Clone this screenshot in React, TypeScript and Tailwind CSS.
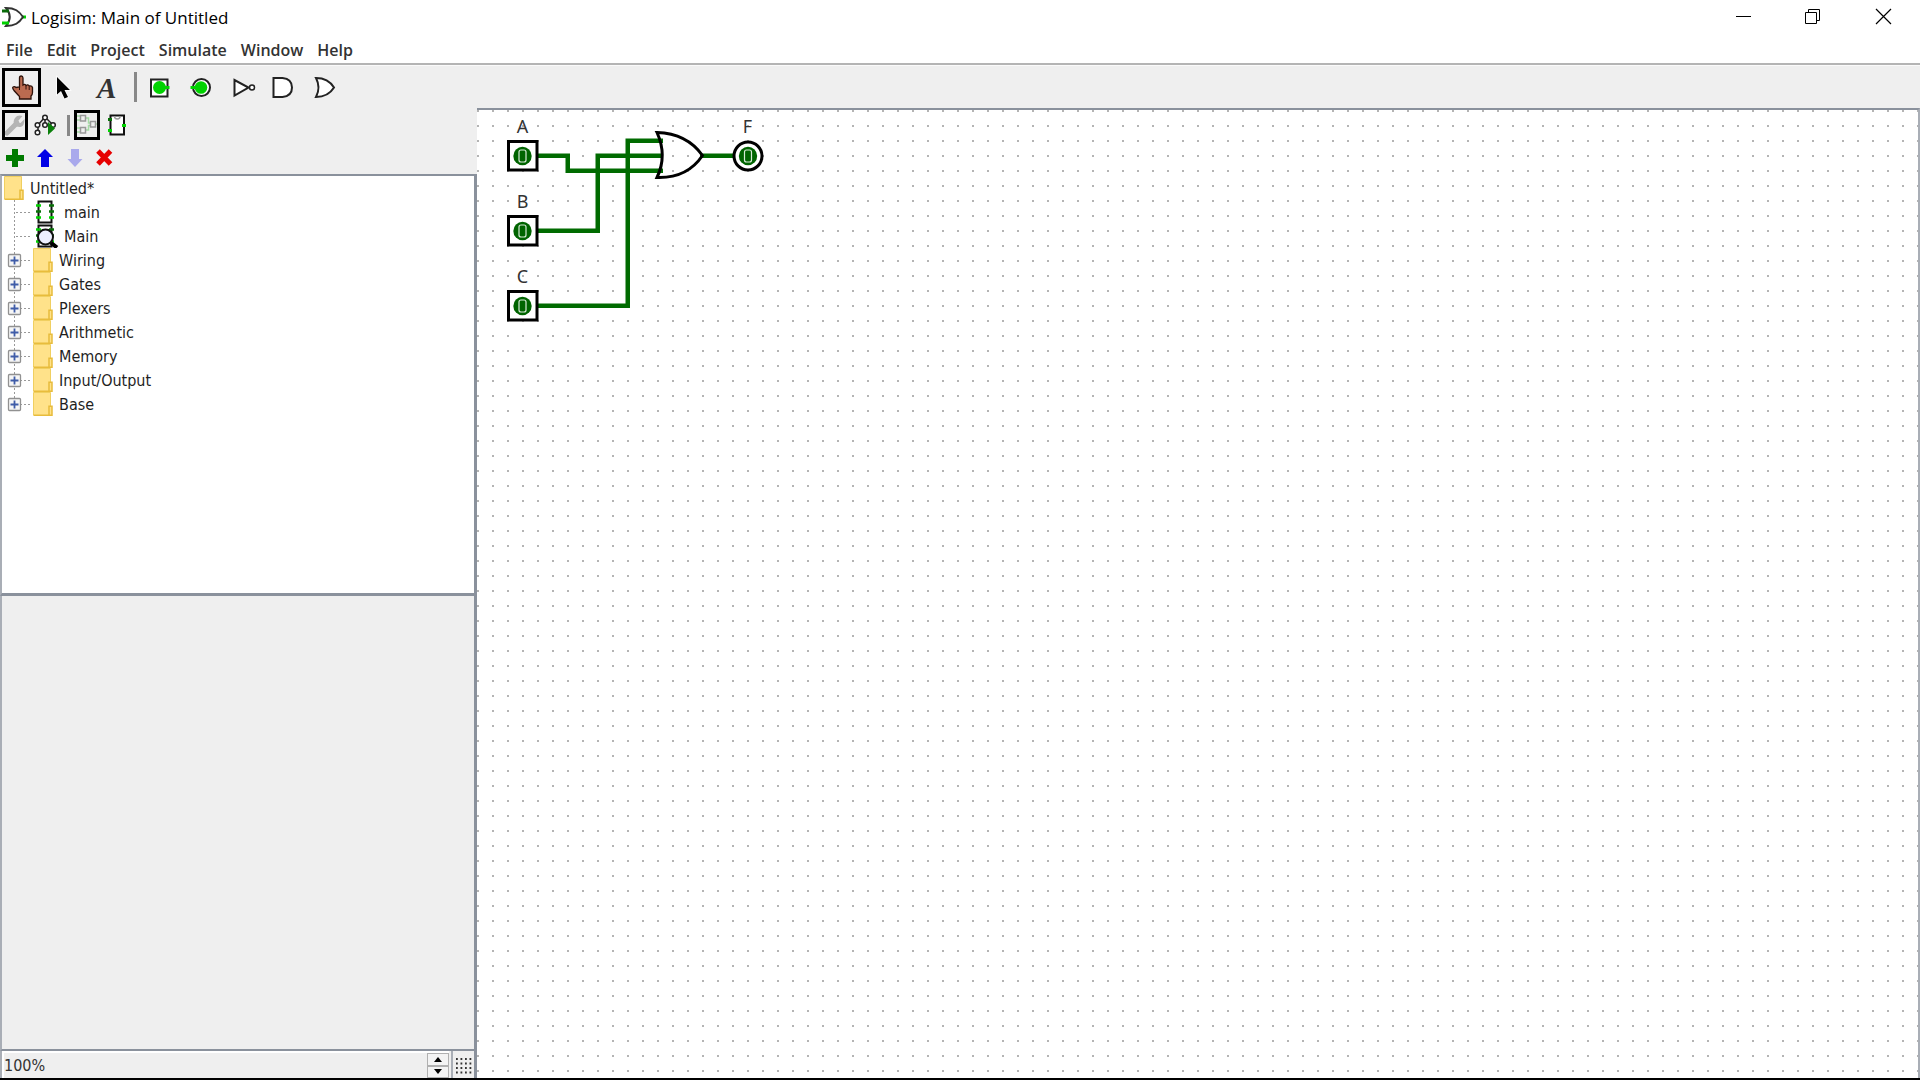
import React from "react";

const uiFont = "font-['DejaVu_Sans_Condensed','Noto_Sans',sans-serif]";
const titleFont = "font-['Open_Sans',sans-serif]";

type IconProps = { box: string; w: number; h: number; children: React.ReactNode };

function Icon({ box, w, h, children }: IconProps) {
  return (
    <svg width={w} height={h} viewBox={box} fill="none" aria-hidden="true" className="block shrink-0">
      {children}
    </svg>
  );
}

function TitleBar() {
  return (
    <header className={`flex h-8 shrink-0 items-start justify-between ${titleFont}`}>
      <div className="flex items-center">
        <Icon box="0 0 31 32" w={31} h={32}>
          <path d="M21 17h5" stroke="#00d200" strokeWidth="3" />
          <path d="M6 8c9 0 13 3 17 9c-4 6-8 9-17 9c5-6 5-12 0-18z" fill="#fff" stroke="#333" strokeWidth="2" />
          <path d="M2 11h7" stroke="#0a6a0a" strokeWidth="3" />
          <path d="M2 23h7" stroke="#00d200" strokeWidth="3" />
        </Icon>
        <h1 className="mt-1 text-[17px] leading-6 text-black">Logisim: Main of Untitled</h1>
      </div>
      <div className="flex">
        <button aria-label="Minimize" className="h-8 w-[70px]">
          <Icon box="0 0 70 32" w={70} h={32}>
            <path d="M27 16.500h15" stroke="#000" />
          </Icon>
        </button>
        <button aria-label="Restore" className="h-8 w-[70px]">
          <Icon box="0 0 70 32" w={70} h={32}>
            <path d="M26.500 12.500h11v11h-11zM29.500 12v-2.500h11v11h-3" stroke="#000" />
          </Icon>
        </button>
        <button aria-label="Close" className="h-8 w-[71px]">
          <Icon box="0 0 71 32" w={71} h={32}>
            <path d="M27 9l15 15M42 9l-15 15" stroke="#000" strokeWidth="1.200" />
          </Icon>
        </button>
      </div>
    </header>
  );
}

function MenuBar() {
  return (
    <nav className={`flex h-[33px] shrink-0 items-center gap-[14px] border-b-2 border-[#b4b4b4] pt-1 pl-[6px] text-[16px] font-semibold text-[#333] ${titleFont}`}>
      {["File", "Edit", "Project", "Simulate", "Window", "Help"].map((m) => (
        <button key={m} className="leading-6">{m}</button>
      ))}
    </nav>
  );
}

function Tool({ label, box, active, children }: { label: string; box: string; active?: boolean; children: React.ReactNode }) {
  return (
    <button
      aria-label={label}
      aria-pressed={!!active}
      className={active ? "h-[39px] w-[39px] outline-[3px] -outline-offset-[3px] outline-black outline-solid" : "h-[39px] w-[39px]"}
    >
      <Icon box={box} w={39} h={39}>{children}</Icon>
    </button>
  );
}

function Toolbar() {
  return (
    <div role="toolbar" aria-label="Tools" className="flex h-[43px] shrink-0 items-end gap-[3px] border-t border-[#fafafa] pb-px pl-[2px]">
      <Tool label="Poke" box="2 68 39 39" active>
        <path
          d="M19.500 87V78q0-2 1.700-2t1.800 2v7q2-1.500 3 .5q2-1.500 3.200.5q2.800-.5 3.300 1.500v5q0 2-1.500 3.500v3H19.500v-2.500L14 90.500q-2-3-1-3.500q1.500-1 3 .5z"
          fill="#bb6b50" stroke="#2c1109" strokeWidth="1.300"
        />
        <path d="M26 85.500v4M29.200 86.500v3.500M19.500 86v4" stroke="#2c1109" />
      </Tool>
      <Tool label="Edit" box="44 68 39 39">
        <path d="M57 77v17.500l4-3.500l3.500 7.500l3.500-1.500l-3.500-7h5.500z" fill="#000" stroke="#fff" strokeWidth="1.500" paintOrder="stroke" />
      </Tool>
      <Tool label="Text" box="86 68 39 39">
        <text x="97" y="98" fontFamily="Liberation Serif, serif" fontSize="29" fontWeight="bold" fontStyle="italic" fill="#333">A</text>
      </Tool>
      <div className="flex h-[35px] w-[9px] justify-end"><div className="h-[30px] w-[3px] bg-[#888]" /></div>
      <Tool label="Input pin" box="140 68 39 39">
        <path d="M151 79.500h16.500v17H151z" fill="#fff" stroke="#222" strokeWidth="2" />
        <circle cx="159.500" cy="87.500" r="6.500" fill="#00d200" />
        <path d="M164 87.500h5.500" stroke="#00d200" strokeWidth="3" />
      </Tool>
      <Tool label="Output pin" box="182 68 39 39">
        <circle cx="201.500" cy="87.500" r="8.500" fill="#fff" stroke="#222" strokeWidth="2" />
        <circle cx="201" cy="87.500" r="6.300" fill="#00d200" />
        <path d="M190.500 87.500h6" stroke="#00d200" strokeWidth="3" />
      </Tool>
      <Tool label="NOT gate" box="224 68 39 39">
        <path d="M234.500 80v15.500l14-8z" fill="#fff" stroke="#222" strokeWidth="2" />
        <circle cx="252" cy="87.500" r="2.500" fill="#fff" stroke="#222" strokeWidth="1.500" />
      </Tool>
      <Tool label="AND gate" box="266 68 39 39">
        <path d="M273.500 78h9q9.500 1 9.500 9.500t-9.500 9.500h-9z" fill="#fff" stroke="#222" strokeWidth="2" />
      </Tool>
      <Tool label="OR gate" box="308 68 39 39">
        <path d="M316 78c9 0 14 3 18 9.500c-4 6.500-9 9.500-18 9.500q5-9.500 0-19z" fill="#fff" stroke="#222" strokeWidth="2" />
      </Tool>
    </div>
  );
}

function ExplorerToolbars() {
  return (
    <>
      <div role="toolbar" aria-label="Views" className="flex h-[31px] shrink-0 items-end pl-[2px]">
        <button aria-label="Show toolbox" className="h-[30px] w-[26px] outline-[3px] -outline-offset-[3px] outline-black outline-solid">
          <Icon box="2 110 26 30" w={26} h={30}>
            <path d="M7 133l10-10" stroke="#b5b5b5" strokeWidth="5" strokeLinecap="round" />
            <path d="M24.500 119l-4 4h-2v-2.500l4-4.500q-5-1.500-7.500 2t-.5 6.500t6 2.500t4-8z" fill="#b5b5b5" />
          </Icon>
        </button>
        <button aria-label="Show simulation" className="h-[30px] w-[36px]">
          <Icon box="28 110 36 30" w={36} h={30}>
            <path d="M45 117l-7 8v9M45 117v8M45 117l8 8" stroke="#222" strokeWidth="1.500" />
            <g fill="#fff" stroke="#222" strokeWidth="1.500">
              <circle cx="45" cy="117.500" r="2.300" />
              <circle cx="37.500" cy="125" r="2.300" />
              <circle cx="45" cy="125" r="2.300" />
              <circle cx="53" cy="125" r="2.300" />
              <circle cx="37.500" cy="132.500" r="2.300" />
            </g>
            <path d="M48 122v13l7-6.500z" fill="#0a800a" />
          </Icon>
        </button>
        <div className="mb-1 ml-[3px] h-[21px] w-[3px] bg-[#888]" />
        <button aria-label="Edit layout" className="ml-[4px] h-[30px] w-[26px] outline-[3px] -outline-offset-[3px] outline-black outline-solid">
          <Icon box="74 110 26 30" w={26} h={30}>
            <path d="M77 116h3M77 120h3M77 128h3M77 132h3M86 118h2.500v5H91M86 130h2.500v-4.500H91M95 124h3" stroke="#a5dba5" strokeWidth="1.500" />
            <path d="M80.500 115.500h5v5.500h-5zM80.500 127.500h5v5.500h-5zM90.500 121.500h5v5.500h-5z" stroke="#999" strokeWidth="1.500" />
          </Icon>
        </button>
        <button aria-label="Edit appearance" className="h-[30px] w-[34px]">
          <Icon box="100 110 34 30" w={34} h={30}>
            <path d="M110.500 115.500h13.500v19h-13.500z" fill="#fff" stroke="#111" strokeWidth="2" />
            <path d="M114.500 116q0 3 2.800 3t2.800-3" stroke="#999" strokeWidth="1.500" />
            <path d="M108 119.500h4" stroke="#087008" strokeWidth="3" />
            <path d="M108 130.500h4M122 125.500h4" stroke="#00d200" strokeWidth="3" />
          </Icon>
        </button>
      </div>
      <div role="toolbar" aria-label="Circuits" className="flex h-[34px] shrink-0 items-end pb-px">
        <button aria-label="Add circuit">
          <Icon box="0 143 30 30" w={30} h={30}>
            <path d="M12 149h6v6h6v6h-6v6h-6v-6H6v-6h6z" fill="#007a00" />
          </Icon>
        </button>
        <button aria-label="Move up">
          <Icon box="30 143 30 30" w={30} h={30}>
            <path d="M45 149l8 8h-4v10h-8v-10h-4z" fill="#0000e6" />
          </Icon>
        </button>
        <button aria-label="Move down" disabled>
          <Icon box="60 143 30 30" w={30} h={30}>
            <path d="M75 167l7.500-8H79v-10h-8v10h-3.500z" fill="#a9a9ec" />
          </Icon>
        </button>
        <button aria-label="Delete circuit">
          <Icon box="90 143 30 30" w={30} h={30}>
            <path d="M98 151l12.500 13M110.500 151L98 164" stroke="#e60000" strokeWidth="5" />
          </Icon>
        </button>
      </div>
    </>
  );
}

function Folder() {
  return (
    <Icon box="0 0 20 24" w={20} h={24}>
      <path d="M.5.5h17v14h1.500v9H.5z" fill="#ffe28a" />
      <path d="M.5 23V.5h17V14" stroke="#f0cf60" />
      <path d="M.5 23.200h18.500v-9h-3v9" stroke="#e8bc3c" strokeWidth="1.500" />
    </Icon>
  );
}

function Chip({ current }: { current?: boolean }) {
  return (
    <Icon box="36 0 24 24" w={24} h={24}>
      <path d="M38.500 1.500h13v21h-13z" fill="#fff" stroke="#111" strokeWidth="2" />
      <path d="M36 5.500h5M36 17.500h5M49 17.500h5" stroke="#00d200" strokeWidth="2.500" />
      <path d="M36 11.500h5M49 5.500h5M49 11.500h5" stroke="#087008" strokeWidth="2.500" />
      {current && (
        <>
          <path d="M50 18l7 5.500" stroke="#000" strokeWidth="4" />
          <circle cx="45.500" cy="13" r="7.500" fill="#eef0ff" stroke="#111" strokeWidth="2" />
        </>
      )}
    </Icon>
  );
}

const libraries = ["Wiring", "Gates", "Plexers", "Arithmetic", "Memory", "Input/Output", "Base"];

function Branch({ last, expander }: { last?: boolean; expander?: boolean }) {
  return (
    <Icon box="2 0 30 24" w={30} h={24}>
      <path d={last ? "M14.500 0v12" : "M14.500 0v24"} stroke="#999" strokeDasharray="2 2" />
      <path d="M16 12.500h15" stroke="#999" strokeDasharray="2 2" />
      {expander && (
        <>
          <rect x="8.500" y="6.500" width="12" height="12" rx="1" fill="#f6f6f6" stroke="#919191" strokeWidth="1.300" />
          <path d="M10.500 12.500h8M14.500 8.500v8" stroke="#3f5ca8" strokeWidth="1.800" />
        </>
      )}
    </Icon>
  );
}

function ExplorerTree() {
  return (
    <div className="min-h-0 flex-[420_1_0] overflow-hidden border-t-2 border-b-3 border-l-2 border-[#8a919c] border-l-[#a9aeb6] bg-white">
      <ul role="tree" className={`text-[16px] leading-[26px] text-[#1f1f1f] ${uiFont}`}>
        <li role="treeitem" className="flex h-6 items-start gap-[6px] pl-[2px]"><Folder />Untitled*</li>
        <li role="treeitem" className="flex h-6 items-start"><Branch /><span className="w-1" /><Chip /><span className="ml-1">main</span></li>
        <li role="treeitem" className="flex h-6 items-start"><Branch /><span className="w-1" /><Chip current /><span className="ml-1">Main</span></li>
        {libraries.map((name, i) => (
          <li role="treeitem" key={name} className="flex h-6 items-start">
            <button aria-label={`Expand ${name}`}><Branch expander last={i === libraries.length - 1} /></button>
            <span className="ml-px mr-[6px]"><Folder /></span>
            {name}
          </li>
        ))}
      </ul>
    </div>
  );
}

function ZoomRow() {
  return (
    <div className="flex h-[27px] shrink-0 border-l-2 border-[#a9aeb6]">
      <div className="flex min-w-0 flex-1 border-2 border-r-0 border-b-0 border-white">
        <input
          aria-label="Zoom"
          defaultValue="100%"
          className={`min-w-0 flex-1 bg-[#efefef] pt-px text-[16px] leading-6 text-[#333] outline-none ${uiFont}`}
        />
        <div className="flex w-[22px] flex-col">
          <button aria-label="Zoom in" className="flex min-h-0 flex-1 items-center justify-center border border-[#b0b0b0] bg-[#f3f3f3]">
            <Icon box="0 0 8 5" w={8} h={5}><path d="M0 5h8L4 0z" fill="#000" /></Icon>
          </button>
          <button aria-label="Zoom out" className="flex min-h-0 flex-1 items-center justify-center border border-[#b0b0b0] bg-[#f3f3f3]">
            <Icon box="0 0 8 5" w={8} h={5}><path d="M0 0h8L4 5z" fill="#000" /></Icon>
          </button>
        </div>
      </div>
      <button aria-label="Toggle grid" className="ml-[2px] w-[23px] border-l-2 border-[#a9aeb6] pl-[2px]">
        <Icon box="0 0 18 26" w={18} h={26}>
          {[0, 1, 2, 3].map((r) => (
            <path key={r} d={`M1 ${r * 4.5 + 7}h17`} stroke="#333" strokeWidth="1.800" strokeDasharray="1.800 2.700" />
          ))}
        </Icon>
      </button>
    </div>
  );
}

function Zero({ x, y }: { x: number; y: number }) {
  return (
    <g>
      <circle cx={x} cy={y} r="9.200" fill="#006400" />
      <rect x={x - 3.5} y={y - 6} width="7" height="12" rx="2" stroke="#d5ead5" strokeWidth="1.200" />
    </g>
  );
}

function PinLabel({ x, y, children }: { x: number; y: number; children: string }) {
  return (
    <text x={x} y={y} textAnchor="middle" fontFamily="Noto Sans, sans-serif" fontSize="18" fill="#333">{children}</text>
  );
}

function InputPin({ y, label }: { y: number; label: string }) {
  return (
    <g>
      <PinLabel x={522.5} y={y - 23}>{label}</PinLabel>
      <rect x="508.500" y={y - 14} width="28.500" height="28.500" fill="#fff" stroke="#000" strokeWidth="3" />
      <Zero x={522.5} y={y + 0.5} />
    </g>
  );
}

function Circuit() {
  return (
    <main className="min-w-0 flex-1 overflow-hidden border-t-2 border-r-2 border-[#8a919c] border-r-[#a9aeb6] bg-white">
      <svg width="100%" height="100%" fill="none" role="img" aria-label="Circuit with inputs A, B, C and output F">
        <defs>
          <pattern id="grid" width="15" height="15" patternUnits="userSpaceOnUse">
            <rect width="2" height="2" fill="#b4b4b4" />
          </pattern>
        </defs>
        <rect width="100%" height="100%" fill="url(#grid)" />
        <g transform="translate(-477 -110)">
          <g stroke="#006b00" strokeWidth="4.500">
            <path d="M536 155.750h31.750v15H663" />
            <path d="M536 230.750h61.750v-75H663" />
            <path d="M536 305.750h91.750v-165H663" />
            <path d="M700 155.750h36" />
          </g>
          <path d="M657 132.500q10.500 23 0 45q30 1 45.500-22q-15.500-22-45.500-23z" stroke="#000" strokeWidth="3" />
          <InputPin y={155.5} label="A" />
          <InputPin y={230.5} label="B" />
          <InputPin y={305.5} label="C" />
          <PinLabel x={747.5} y={132.5}>F</PinLabel>
          <circle cx="748" cy="156" r="14" fill="#fff" stroke="#000" strokeWidth="3" />
          <Zero x={748} y={156} />
        </g>
      </svg>
    </main>
  );
}

export default function App() {
  return (
    <div className="flex h-screen flex-col overflow-hidden border-b-2 border-black bg-white">
      <TitleBar />
      <MenuBar />
      <div className="flex min-h-0 flex-1 flex-col bg-[#efefef]">
        <Toolbar />
        <div className="flex min-h-0 flex-1">
          <aside className="flex w-[477px] shrink-0 flex-col">
            <div className="flex flex-col pt-px"><ExplorerToolbars /></div>
            <div className="flex min-h-0 flex-1 flex-col border-r-3 border-[#8a919c]">
              <ExplorerTree />
              <section aria-label="Attributes" className="min-h-0 flex-[456_1_0] border-b-2 border-l-2 border-[#8a919c] border-l-[#a9aeb6]" />
              <ZoomRow />
            </div>
          </aside>
          <Circuit />
        </div>
      </div>
    </div>
  );
}
